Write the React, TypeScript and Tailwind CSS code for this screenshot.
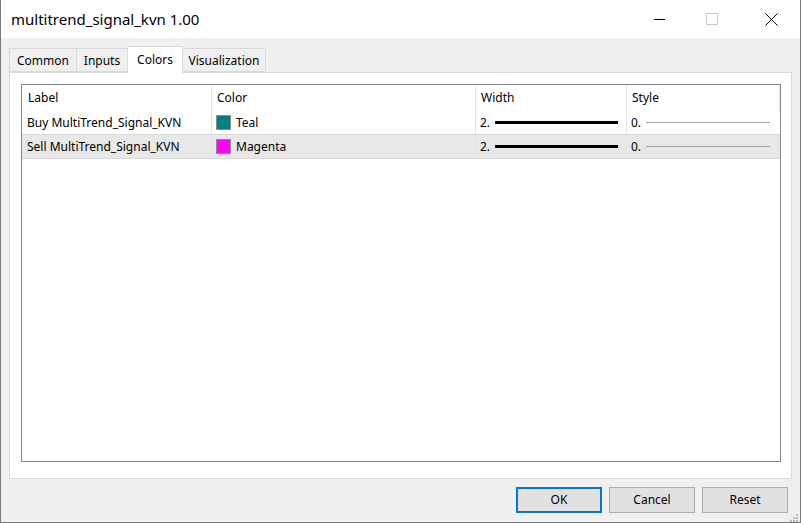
import React from "react";

const font = { fontFamily: '"Noto Sans", "Open Sans", sans-serif' };

function Row({ label, color, name, bg }: { label: string; color: string; name: string; bg: string }) {
  return (
    <div className={`flex h-[24px] border-b border-[#d9d9d9] ${bg} text-[12px] text-black`}>
      <div className="w-[190px] border-r border-[#e3e3e3] pl-[5px] flex items-center">{label}</div>
      <div className="w-[264px] border-r border-[#e3e3e3] pl-[4px] flex items-center gap-[5px]">
        <span className="w-[15px] h-[15px] border border-[#8c8c8c]" style={{ background: color }} />
        <span>{name}</span>
      </div>
      <div className="w-[151px] border-r border-[#e3e3e3] pl-[4px] pr-[8px] flex items-center gap-[5px]">
        <span>2.</span>
        <span className="flex-1 h-[3px] bg-black" />
      </div>
      <div className="flex-1 pl-[4px] pr-[10px] flex items-center gap-[5px]">
        <span>0.</span>
        <span className="flex-1 h-px bg-[#a0a0a0]" />
      </div>
    </div>
  );
}

export default function App() {
  return (
    <div className="w-[801px] h-[523px] bg-[#f0f0f0] border-l border-r border-b border-[#7a7a7a] flex flex-col overflow-hidden" style={font}>
      <div className="h-[38px] bg-white flex items-center justify-between shrink-0">
        <span className="pl-[10px] text-[15px] text-black">multitrend_signal_kvn 1.00</span>
        <div className="flex items-center h-full">
          <div className="w-[46px] h-full flex items-center justify-center">
            <span className="w-[11px] h-px bg-black" />
          </div>
          <div className="w-[60px] h-full flex items-center justify-center">
            <span className="w-[12px] h-[12px] border border-[#c8c8c8]" />
          </div>
          <div className="w-[58px] h-full flex items-center justify-center">
            <svg width="13" height="13" viewBox="0 0 13 13">
              <path d="M0.5 0.5 L12.5 12.5 M12.5 0.5 L0.5 12.5" stroke="#000" strokeWidth="1" />
            </svg>
          </div>
        </div>
      </div>
      <div className="flex-1 flex flex-col px-[8px] pt-[8px]">
        <div className="flex items-end h-[26px] text-[12px] text-black">
          <div className="h-[24px] w-[68px] border border-[#d9d9d9] bg-[#f0f0f0] flex items-center justify-center pt-[2px]">Common</div>
          <div className="h-[24px] w-[51px] border border-l-0 border-[#d9d9d9] bg-[#f0f0f0] flex items-center justify-center pt-[2px]">Inputs</div>
          <div className="h-[27px] w-[55px] border border-l-0 border-b-0 border-[#d9d9d9] bg-white flex items-start pt-[4px] justify-center -mb-px relative z-10">Colors</div>
          <div className="h-[24px] w-[83px] border border-l-0 border-[#d9d9d9] bg-[#f0f0f0] flex items-center justify-center pt-[2px]">Visualization</div>
        </div>
        <div className="h-[407px] bg-white border border-[#d9d9d9] pl-[11px] pr-[10px] pt-[11px] pb-[16px]">
          <div className="h-full border border-[#828790] flex flex-col">
            <div className="flex h-[26px] text-[12px] text-black">
              <div className="w-[190px] border-r border-[#e5e5e5] pl-[6px] flex items-center">Label</div>
              <div className="w-[264px] border-r border-[#e5e5e5] pl-[5px] flex items-center">Color</div>
              <div className="w-[151px] border-r border-[#e5e5e5] pl-[5px] flex items-center">Width</div>
              <div className="flex-1 border-r border-[#e5e5e5] pl-[5px] flex items-center">Style</div>
            </div>
            <Row label="Buy MultiTrend_Signal_KVN" color="#008080" name="Teal" bg="bg-white" />
            <Row label="Sell MultiTrend_Signal_KVN" color="#ff00ff" name="Magenta" bg="bg-[#e8e8e8]" />
          </div>
        </div>
        <div className="flex justify-end gap-[7px] pt-[8px] pr-[4px] text-[12px] text-black relative">
          <button className="w-[86px] h-[26px] bg-[#e1e1e1] border-2 border-[#0078d7]">OK</button>
          <button className="w-[86px] h-[26px] bg-[#e1e1e1] border border-[#adadad]">Cancel</button>
          <button className="w-[86px] h-[26px] bg-[#e1e1e1] border border-[#adadad]">Reset</button>
          <svg className="absolute right-[-7px] bottom-[-10px]" width="10" height="10" viewBox="0 0 10 10">
            <rect x="7" y="1" width="2" height="2" fill="#b8b8b8" />
            <rect x="4" y="4" width="2" height="2" fill="#b8b8b8" />
            <rect x="7" y="4" width="2" height="2" fill="#b8b8b8" />
            <rect x="1" y="7" width="2" height="2" fill="#b8b8b8" />
            <rect x="4" y="7" width="2" height="2" fill="#b8b8b8" />
            <rect x="7" y="7" width="2" height="2" fill="#b8b8b8" />
          </svg>
        </div>
      </div>
    </div>
  );
}
